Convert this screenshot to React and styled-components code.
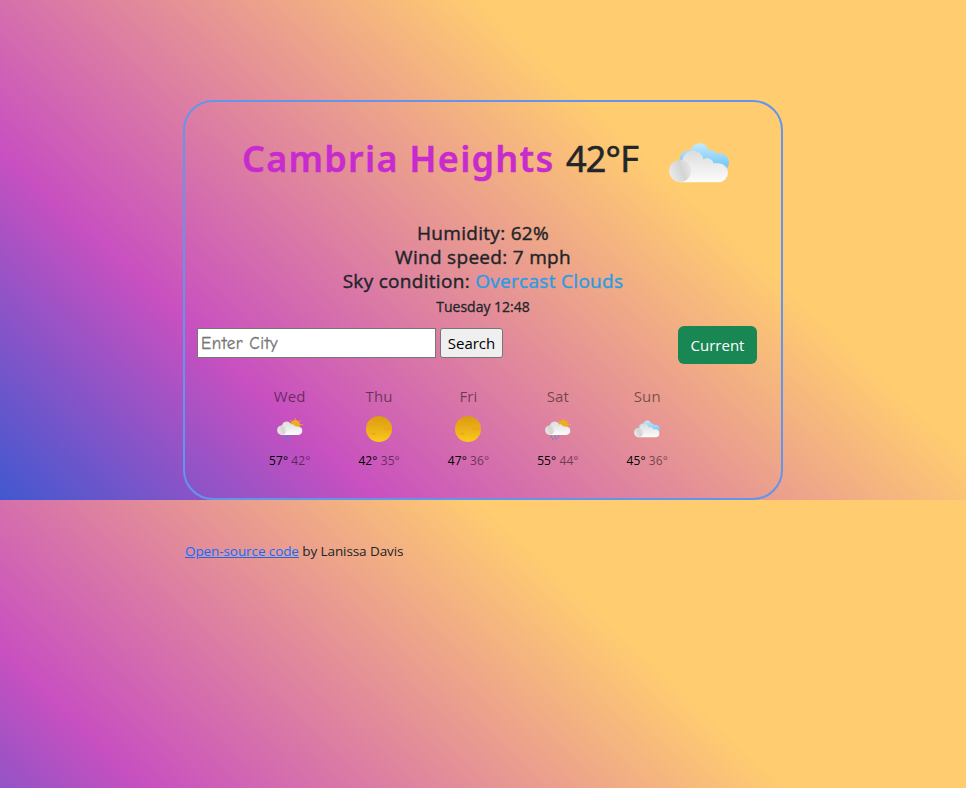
import React from "react";
import styled, { createGlobalStyle } from "styled-components";

const GlobalStyle = createGlobalStyle`
  body {
    margin: 0;
    min-height: 100vh;
    color: #212529;
    font-family: "Segoe UI", "Open Sans", sans-serif;
    font-size: 16px;
    line-height: 24px;
    background-image: linear-gradient(43deg, #4158d0 0%, #c850c0 25%, #ffcc70 67.5%);
    background-size: 100% 500px;
  }
`;

const Page = styled.main`
  display: flow-root;
  width: 600px;
  margin: 0 auto;
`;

const Card = styled.section`
  box-sizing: border-box;
  height: 400px;
  margin-top: 100px;
  border: 2px solid cornflowerblue;
  border-radius: 30px;
  display: flex;
  flex-direction: column;
`;

const Heading = styled.h1`
  display: flex;
  align-items: center;
  margin: 34px 0 0 57px;
  height: 46px;
  font-size: 37px;
  line-height: 46px;
  font-weight: 400;
  white-space: nowrap;
`;

const City = styled.span`
  width: 324px;
  color: #c72bcd;
  font-family: "Lucida Sans", "Noto Sans", sans-serif;
  font-weight: 600;
  font-size: 36px;
  letter-spacing: 1.25px;
  -webkit-text-stroke: 0.4px currentColor;
`;

const Temperature = styled.span`
  width: 103px;
  font-size: 36px;
  letter-spacing: -0.8px;
  -webkit-text-stroke: 0.7px currentColor;
`;

const HeadingIcon = styled.svg`
  width: 60px;
  height: 40px;
  margin-top: 7px;
`;

const Conditions = styled.div`
  margin-top: 39px;
  text-align: center;
  font-size: 19px;
  font-weight: 400;
  line-height: 24px;
  letter-spacing: 0.3px;
  -webkit-text-stroke: 0.4px currentColor;
`;

const Sky = styled.span`
  color: #2a9ce6;
`;

const Timestamp = styled.div`
  margin-top: 5px;
  text-align: center;
  font-size: 14px;
  line-height: 17px;
  -webkit-text-stroke: 0.3px currentColor;
`;

const SearchBar = styled.form`
  display: flex;
  align-items: center;
  height: 38px;
  margin: 11px 24px 0 12px;
`;

const CityInput = styled.input`
  box-sizing: border-box;
  width: 239px;
  height: 30px;
  margin: 0 4px 4px 0;
  padding: 1px 3px;
  border: 1px solid #767676;
  background: #fff;
  font-family: "Comic Sans MS", "Comic Neue", "Lato", sans-serif;
  font-size: 17px;
  letter-spacing: 0.55px;
  &::placeholder {
    color: #757575;
    opacity: 1;
    -webkit-text-stroke: 0.3px #757575;
  }
`;

const SearchButton = styled.button`
  box-sizing: border-box;
  width: 63px;
  height: 30px;
  margin-bottom: 4px;
  padding: 0;
  border: 1px solid #767676;
  border-radius: 3px;
  background: #efefef;
  color: #000;
  font: 400 15px/24px "Segoe UI", "Open Sans", sans-serif;
`;

const CurrentButton = styled.button`
  width: 79px;
  height: 38px;
  margin-left: auto;
  padding: 0;
  border: 0;
  border-radius: 6px;
  background: #198754;
  color: #fff;
  font: 400 15px/24px "Segoe UI", "Open Sans", sans-serif;
`;

const Forecast = styled.div`
  display: grid;
  grid-template-columns: repeat(5, 89.4px);
  margin: 20px 0 0 60px;
  text-align: center;
`;

const Day = styled.div`
  display: flex;
  flex-direction: column;
  align-items: center;
`;

const DayName = styled.div`
  font-size: 15px;
  line-height: 24px;
  letter-spacing: 0.1px;
  color: rgba(0, 0, 0, 0.5);
`;

const DayIcon = styled.svg`
  width: 30px;
  height: 30px;
  margin-top: 6px;
`;

const Range = styled.div`
  margin-top: 8px;
  font-size: 12px;
  line-height: 18px;
  letter-spacing: 0.08px;
  color: #000;
  white-space: nowrap;
`;

const Low = styled.span`
  opacity: 0.5;
`;

const Footer = styled.footer`
  margin: 42px 0 0 2px;
  font-size: 13.5px;
  line-height: 19px;
  letter-spacing: -0.09px;
`;

const SourceLink = styled.a`
  color: #0d6efd;
  text-decoration: underline;
`;

const HiddenSvg = styled.svg`
  display: block;
`;

function IconDefs() {
  return (
    <HiddenSvg width="0" height="0" aria-hidden="true">
      <defs>
        <linearGradient id="white" x1="0" y1="0" x2="0" y2="1">
          <stop offset="0" stopColor="#dcdcdc" />
          <stop offset="1" stopColor="#fcfcfc" />
        </linearGradient>
        <linearGradient id="puff" x1="0" y1="0.75" x2="1" y2="0.35">
          <stop offset="0" stopColor="#ededed" />
          <stop offset="0.6" stopColor="#d4d4d4" />
          <stop offset="1" stopColor="#d4d4d4" stopOpacity="0.3" />
        </linearGradient>
        <linearGradient id="blue" x1="0" y1="0" x2="0" y2="1">
          <stop offset="0" stopColor="#c5e9fc" />
          <stop offset="1" stopColor="#70c6f6" />
        </linearGradient>
        <linearGradient id="sun" x1="0" y1="0" x2="0" y2="1">
          <stop offset="0" stopColor="#d99a12" />
          <stop offset="1" stopColor="#fbc91d" />
        </linearGradient>
      </defs>
    </HiddenSvg>
  );
}

function WhiteCloud() {
  return (
    <>
      <path fill="url(#white)" d="M11.2 39.2A11.2 11.2 0 0 1 13.4 17A10.6 10.6 0 0 1 34.4 16.6Q39 12.6 43.8 18.3L44.2 20.2H49.5A9.5 9.5 0 0 1 49.5 39.2Z" />
      <circle cx="11" cy="28" r="10.9" fill="url(#puff)" />
    </>
  );
}

function Clouds() {
  return (
    <>
      <path fill="url(#blue)" d="M10.5 17Q11 7.5 21.5 7C25-2.5 38-1.8 39.5 7.3Q43.7 5 47 10.7A9.4 9.4 0 0 1 58 25Z" />
      <WhiteCloud />
    </>
  );
}

function DayArt({ kind }) {
  if (kind === "sun") {
    return (
      <>
        <circle cx="15" cy="15" r="13" fill="url(#sun)" />
        <path fill="#f1a01a" fillOpacity=".75" d="M5.4 6.5H11Q13 7.4 11 8.8H9Q9 10.3 5 10H3.3Q3.6 8 5.4 6.5ZM20 13.2H27.8L28 16.6H21Q21 15.3 19 15.2Q18 14 20 13.2ZM8 18.8H11Q13 19.7 11 20.8H8Q5.5 20 8 18.8Z" />
      </>
    );
  }
  if (kind === "rain") {
    return (
      <>
        <g stroke="#efad1c" strokeWidth=".8">
          <path d="M20.2 4V8M15 6L18 9M25.6 6L23 9M24 13L27 15M24 10.7H28" />
        </g>
        <circle cx="20.2" cy="10.8" r="4.8" fill="#efad1c" />
        <path fill="url(#white)" d="M6.8 20.9A4.8 4.8 0 0 1 7 11.6A4.9 4.9 0 0 1 16.3 10.4Q18.5 9.5 20 12.3L23.8 12.8A4.1 4.1 0 0 1 23.8 20.9Z" />
        <circle cx="6.8" cy="16.1" r="4.7" fill="url(#puff)" />
        <path stroke="#4d87ca" strokeWidth="1.3" d="M8 21.8V23.5M12 21.8V23.5M15.4 21.8V23.5M9.9 24V25.6M13.3 24V25.6" />
      </>
    );
  }
  return <g transform="translate(2 6.5) scale(.43)"><Clouds /></g>;
}

const days = [
  { name: "Wed", icon: "rain", high: 57, low: 42 },
  { name: "Thu", icon: "sun", high: 42, low: 35 },
  { name: "Fri", icon: "sun", high: 47, low: 36 },
  { name: "Sat", icon: "rain", high: 55, low: 44 },
  { name: "Sun", icon: "clouds", high: 45, low: 36 },
];

export default function App() {
  return (
    <>
      <GlobalStyle />
      <Page>
        <Card>
          <Heading>
            <City>Cambria Heights</City>
            <Temperature>42°F</Temperature>
            <HeadingIcon viewBox="0 0 60 40"><Clouds /></HeadingIcon>
          </Heading>
          <Conditions>
            <div>Humidity: 62%</div>
            <div>Wind speed: 7 mph</div>
            <div>Sky condition: <Sky>Overcast Clouds</Sky></div>
          </Conditions>
          <Timestamp>Tuesday 12:48</Timestamp>
          <SearchBar onSubmit={(e) => e.preventDefault()}>
            <CityInput placeholder="Enter City" aria-label="City" />
            <SearchButton>Search</SearchButton>
            <CurrentButton type="button">Current</CurrentButton>
          </SearchBar>
          <Forecast>
            {days.map((day) => (
              <Day key={day.name}>
                <DayName>{day.name}</DayName>
                <DayIcon viewBox="0 0 30 30"><DayArt kind={day.icon} /></DayIcon>
                <Range>{day.high}° <Low>{day.low}°</Low></Range>
              </Day>
            ))}
          </Forecast>
        </Card>
        <Footer>
          <SourceLink href="#">Open-source code</SourceLink> by Lanissa Davis
        </Footer>
        <IconDefs />
      </Page>
    </>
  );
}
